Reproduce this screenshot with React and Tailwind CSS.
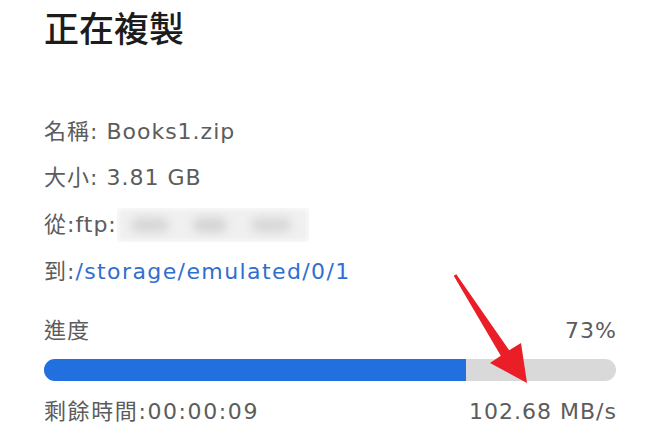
export default function App() {
  const progress = 73.8;
  return (
    <div
      className="relative w-[660px] h-[434px] overflow-hidden bg-white"
      style={{ fontFamily: '"DejaVu Sans", "Noto Sans CJK TC", sans-serif' }}
    >
      <div className="flex flex-col px-[44px]">
        <h1
          className="mt-[7px] h-[40px] leading-[40px] text-[35px] font-medium text-[#1c1c1c]"
          style={{ fontFamily: '"Noto Sans CJK TC", sans-serif' }}
        >
          正在複製
        </h1>

        <div className="mt-[62px] flex flex-col text-[22px] tracking-[1px] text-[#5c5c5c]">
          <div className="h-[46px] leading-[46px]">名稱: Books1.zip</div>
          <div className="h-[46px] leading-[46px]">大小: 3.81 GB</div>
          <div className="h-[47px] leading-[47px] flex items-center">
            <span>從:ftp:</span>
            <span className="relative h-[34px] w-[192px] overflow-hidden">
              <span className="absolute inset-0 bg-[#f0f0f0] blur-[3px]" />
              <span className="absolute left-[14px] top-[10px] h-[14px] w-[38px] rounded-full bg-[#d6d6d6] blur-[5px]" />
              <span className="absolute left-[76px] top-[10px] h-[14px] w-[34px] rounded-full bg-[#d3d3d3] blur-[5px]" />
              <span className="absolute left-[134px] top-[10px] h-[14px] w-[40px] rounded-full bg-[#d7d7d7] blur-[5px]" />
            </span>
          </div>
          <div className="h-[47px] leading-[47px]">
            到:<span className="tracking-[1.4px] text-[#2f6fcf]">/storage/emulated/0/1</span>
          </div>
        </div>

        <div className="mt-[18px] flex items-center justify-between h-[34px] text-[22px] tracking-[1px] text-[#5c5c5c]">
          <span>進度</span>
          <span className="-mr-[1px]">73%</span>
        </div>

        <div className="mt-[12px] h-[22px] w-full rounded-full bg-[#d9d9d9] overflow-hidden">
          <div className="h-full bg-[#2270df]" style={{ width: `${progress}%` }} />
        </div>

        <div className="mt-[13px] flex items-center justify-between h-[34px] text-[22px] tracking-[1px] text-[#5c5c5c]">
          <span className="tracking-[1.6px]">剩餘時間:00:00:09</span>
          <span className="-mr-[1px]">102.68 MB/s</span>
        </div>
      </div>

      <svg className="absolute left-0 top-0" width="660" height="434" viewBox="0 0 660 434">
        <polygon
          points="456.3,274.2 509.2,350.3 521,343 527,383 490,363 500.8,355.7 453.7,275.8"
          fill="#e91e27"
        />
      </svg>
    </div>
  );
}
